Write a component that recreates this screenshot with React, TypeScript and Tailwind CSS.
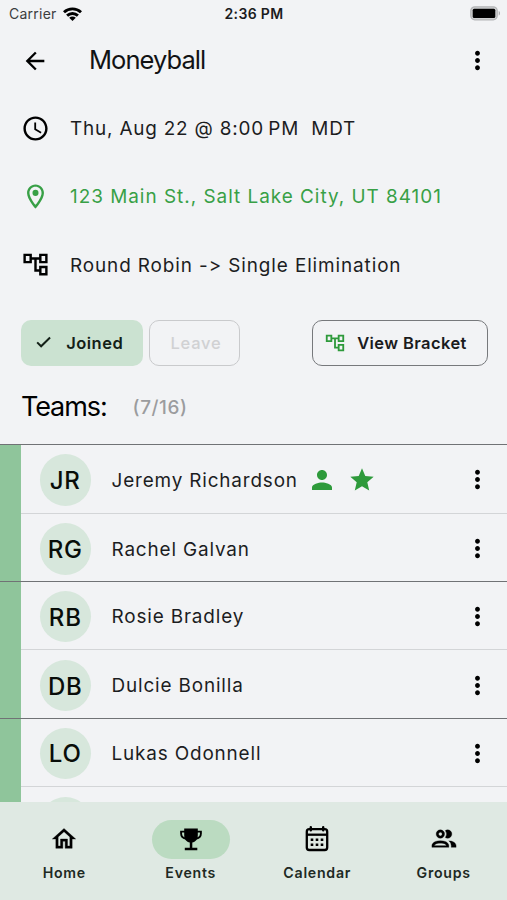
import type { ReactNode } from "react";
import {
  MdAccessTime,
  MdArrowBack,
  MdMoreVert,
  MdOutlineAccountTree,
  MdOutlineLocationOn,
  MdPerson,
  MdStar
} from "react-icons/md";

interface Player {
  initials: string;
  name: string;
  isCurrentUser?: boolean;
}

interface NavItem {
  label: string;
  icon: ReactNode;
  active?: boolean;
}

// Teams of two
const teams: Player[][] = [
  [
    { initials: "JR", name: "Jeremy Richardson", isCurrentUser: true },
    { initials: "RG", name: "Rachel Galvan" }
  ],
  [
    { initials: "RB", name: "Rosie Bradley" },
    { initials: "DB", name: "Dulcie Bonilla" }
  ],
  [
    { initials: "LO", name: "Lukas Odonnell" },
    { initials: "", name: "" }
  ]
];

function CheckIcon() {
  return (
    <svg width="19" height="19" viewBox="0 0 24 24" fill="none" stroke="currentColor" strokeWidth="2.500">
      <path d="M4 11.800 9 16.800 20.300 5.600" />
    </svg>
  );
}

function HomeIcon() {
  return (
    <svg width="28" height="28" viewBox="0 0 24 24" fill="#000" stroke="#000" strokeWidth="0.3">
      <path d="M12 5.690l5 4.500V18h-2v-6H9v6H7v-7.810l5-4.500M12 3 2 12h3v8h6v-6h2v6h6v-8h3L12 3Z" />
    </svg>
  );
}

function TrophyIcon() {
  return (
    <svg width="22" height="23" viewBox="0 0 22 23" fill="none" stroke="#000" strokeWidth="1.9">
      <path d="M5 3.600H1.100v1.900c0 3.200 2 4.900 5.400 5.200M17 3.600h3.900v1.900c0 3.200-2 4.900-5.400 5.200" />
      <path d="M4.200.4h13.600v6.800c0 4.200-2.400 6.600-5.500 7.400v5.200h5v2.500H4.800v-2.500h5v-5.200C6.600 13.800 4.200 11.400 4.200 7.200Z" fill="#000" stroke="none" />
    </svg>
  );
}

function CalendarIcon() {
  return (
    <svg width="24" height="26" viewBox="0 0 24 26" fill="none" stroke="#000" strokeWidth="2.3">
      <rect x="1.800" y="3.200" width="20.400" height="20.800" rx="2.500" />
      <path d="M2 8.700h20" />
      <path d="M5.800 1.200v3M18.200 1.200v3" strokeWidth="2.4" strokeLinecap="round" />
      <path d="M5.700 13.800h2.600M10.700 13.800h2.600M15.700 13.800h2.600M5.700 18.800h2.600M10.700 18.800h2.600M15.700 18.800h2.600" strokeWidth="2.6" />
    </svg>
  );
}

function GroupsIcon() {
  return (
    <svg width="30" height="29" viewBox="0 0 24 24" fill="#000" stroke="#000" strokeWidth="0.25">
      <path d="M13.070 10.410a5 5 0 0 0 0-5.820A3.390 3.390 0 0 1 15 4a3.500 3.500 0 0 1 0 7 3.390 3.390 0 0 1-1.930-.59M5.500 7.500A3.500 3.500 0 1 1 9 11a3.500 3.500 0 0 1-3.500-3.500m2 0A1.500 1.500 0 1 0 9 6a1.500 1.500 0 0 0-1.500 1.500M16 17v1.500H2V17s0-4 7-4 7 4 7 4m-2 0c-.14-.78-1.330-2-5-2s-4.930 1.310-5 2m11.950-4A5.320 5.320 0 0 1 18 17v1.500h4V17s0-3.630-6.060-4Z" />
    </svg>
  );
}

const navItems: NavItem[] = [
  { label: "Home", icon: <HomeIcon /> },
  { label: "Events", icon: <TrophyIcon />, active: true },
  { label: "Calendar", icon: <CalendarIcon /> },
  { label: "Groups", icon: <GroupsIcon /> }
];

function StatusBar() {
  return (
    <div className="grid h-[27px] shrink-0 grid-cols-3 items-center pl-[9px] pr-[6px]">
      <div className="flex items-center gap-[6px] text-[14px] tracking-[0.25px] text-[#3c3d3f]">
        Carrier
        <svg width="19" height="14" viewBox="0 0 19 14" fill="none" stroke="#000" strokeWidth="2.900">
          <path d="M1 5.200C5.800.7 13.200.7 18 5.200" />
          <path d="M4.100 8.600C7.200 5.700 11.800 5.700 14.900 8.600" />
          <path d="M6.200 10.800C8.100 9 10.900 9 12.800 10.800L9.500 14Z" fill="#000" stroke="none" />
        </svg>
      </div>
      <div className="-ml-[2px] text-center text-[14px] font-semibold tracking-[0.35px] text-[#1b1c1e]">2:36 PM</div>
      <svg className="justify-self-end" width="31" height="15" viewBox="0 0 31 15">
        <rect x="0.800" y="0.800" width="26.400" height="13" rx="4" fill="#cfd0d2" stroke="#b4b5b7" strokeWidth="1.300" />
        <rect x="2.700" y="2.700" width="22.600" height="9.200" rx="1.500" fill="#000" />
        <path d="M28.700 5v4.600c1.800-.6 1.800-4 0-4.600Z" fill="#adaeb0" />
      </svg>
    </div>
  );
}

function DetailRow({ icon, children, className = "text-[#1c1d1f]" }: { icon: ReactNode; children: ReactNode; className?: string }) {
  return (
    <div className={`flex h-[68.400px] items-center pl-[21px] text-[18.900px] ${className}`}>
      <span className="w-[49px]">{icon}</span>
      <span className="whitespace-pre pt-[2px]">{children}</span>
    </div>
  );
}

function PlayerRow({ player }: { player: Player }) {
  return (
    <div className="flex h-[68.400px] items-center border-b border-[#d3d5d7] pl-[19px] pr-[15px] pt-[2px] last:border-b-0">
      <div className="flex size-[51.500px] items-center justify-center rounded-full bg-[#d7e7dc] pt-[2px] text-[24px] font-medium tracking-[0.8px] text-[#080d09]">
        {player.initials}
      </div>
      <span className="ml-[20.500px] pt-[2px] text-[18.900px] tracking-[0.850px] text-[#1c1d1f]">{player.name}</span>
      {player.isCurrentUser && (
        <span className="ml-[9px] flex items-center gap-[11px] text-[#2e9a3b]">
          <MdPerson size={30} />
          <MdStar size={28} />
        </span>
      )}
      <MdMoreVert size={29} className="ml-auto" />
    </div>
  );
}

export default function App() {
  return (
    <div className="flex h-[900px] w-[507px] flex-col overflow-hidden bg-[#f2f3f5] font-['Inter',sans-serif] text-black">
      <StatusBar />

      <header className="flex h-[67px] shrink-0 items-center pl-[21px] pr-[15px]">
        <MdArrowBack size={28} />
        <h1 className="ml-[40px] text-[25.500px] tracking-[-0.950px] text-[#111214]">Moneyball</h1>
        <MdMoreVert size={29} className="ml-auto" />
      </header>

      <section className="shrink-0">
        <DetailRow icon={<MdAccessTime size={29} className="text-black" />}>
          <span className="tracking-[0.820px]">{"Thu, Aug 22 @ 8:00\u2009PM  MDT"}</span>
        </DetailRow>
        <DetailRow icon={<MdOutlineLocationOn size={29} />} className="text-[#38a046]">
          <span className="tracking-[1px]">123 Main St., Salt Lake City, UT 84101</span>
        </DetailRow>
        <DetailRow icon={<MdOutlineAccountTree size={29} className="text-black" />}>
          <span className="tracking-[0.900px]">{"Round Robin -> Single Elimination"}</span>
        </DetailRow>
      </section>

      <div className="mt-[20.500px] flex h-[46.500px] shrink-0 pl-[20.700px] pr-[19.300px] text-[16.500px] font-[580]">
        <button className="flex w-[122px] items-center rounded-[10px] bg-[#cbe2d1] pl-[13.500px] tracking-[0.5px] text-[#132017]">
          <CheckIcon />
          <span className="ml-[13px]">Joined</span>
        </button>
        <button className="ml-[6.800px] w-[91px] rounded-[10px] border-[1.500px] border-[#c9cacc] font-medium tracking-[0.8px] text-[#d0d1d3]">
          <span className="ml-[2px]">Leave</span>
        </button>
        <button className="ml-auto flex w-[176px] items-center rounded-[10px] border-[1.500px] border-[#77797c] pl-[11.500px] tracking-[0.4px] text-[#1a1b1d]">
          <MdOutlineAccountTree size={22} className="text-[#2e9a3b]" />
          <span className="ml-[11px] whitespace-nowrap">View Bracket</span>
        </button>
      </div>

      <div className="flex h-[78px] shrink-0 items-center pl-[21px] pt-[4px]">
        <h2 className="text-[27px] tracking-[-1.100px]">Teams:</h2>
        <span className="ml-[26px] pt-[2px] text-[18.900px] font-medium tracking-[0.6px] text-[#9b9c9e]">(7/16)</span>
      </div>

      <main className="min-h-0 flex-1 overflow-hidden">
        {teams.map((team, index) => (
          <div key={index} className="h-[136.800px] border-t-[1.500px] border-[#707275]">
            <div className="flex h-full">
              <div className="w-[20.500px] shrink-0 bg-[#8fc59b]" />
              <div className="flex-1">
                {team.map((player, i) => (
                  <PlayerRow key={i} player={player} />
                ))}
              </div>
            </div>
          </div>
        ))}
      </main>

      <nav className="grid h-[98px] shrink-0 grid-cols-4 bg-[#dfe9e3] pl-[1px] pt-[17.500px]">
        {navItems.map((item) => (
          <div key={item.label} className="flex flex-col items-center">
            <div className={`flex h-[39px] w-[78px] items-center justify-center rounded-full ${item.active ? "bg-[#bbdbc1]" : ""}`}>
              {item.icon}
            </div>
            <span className="mt-[4px] text-[14.150px] font-[580] leading-[20px] tracking-[0.750px] text-[#202923]">
              {item.label}
            </span>
          </div>
        ))}
      </nav>
    </div>
  );
}
